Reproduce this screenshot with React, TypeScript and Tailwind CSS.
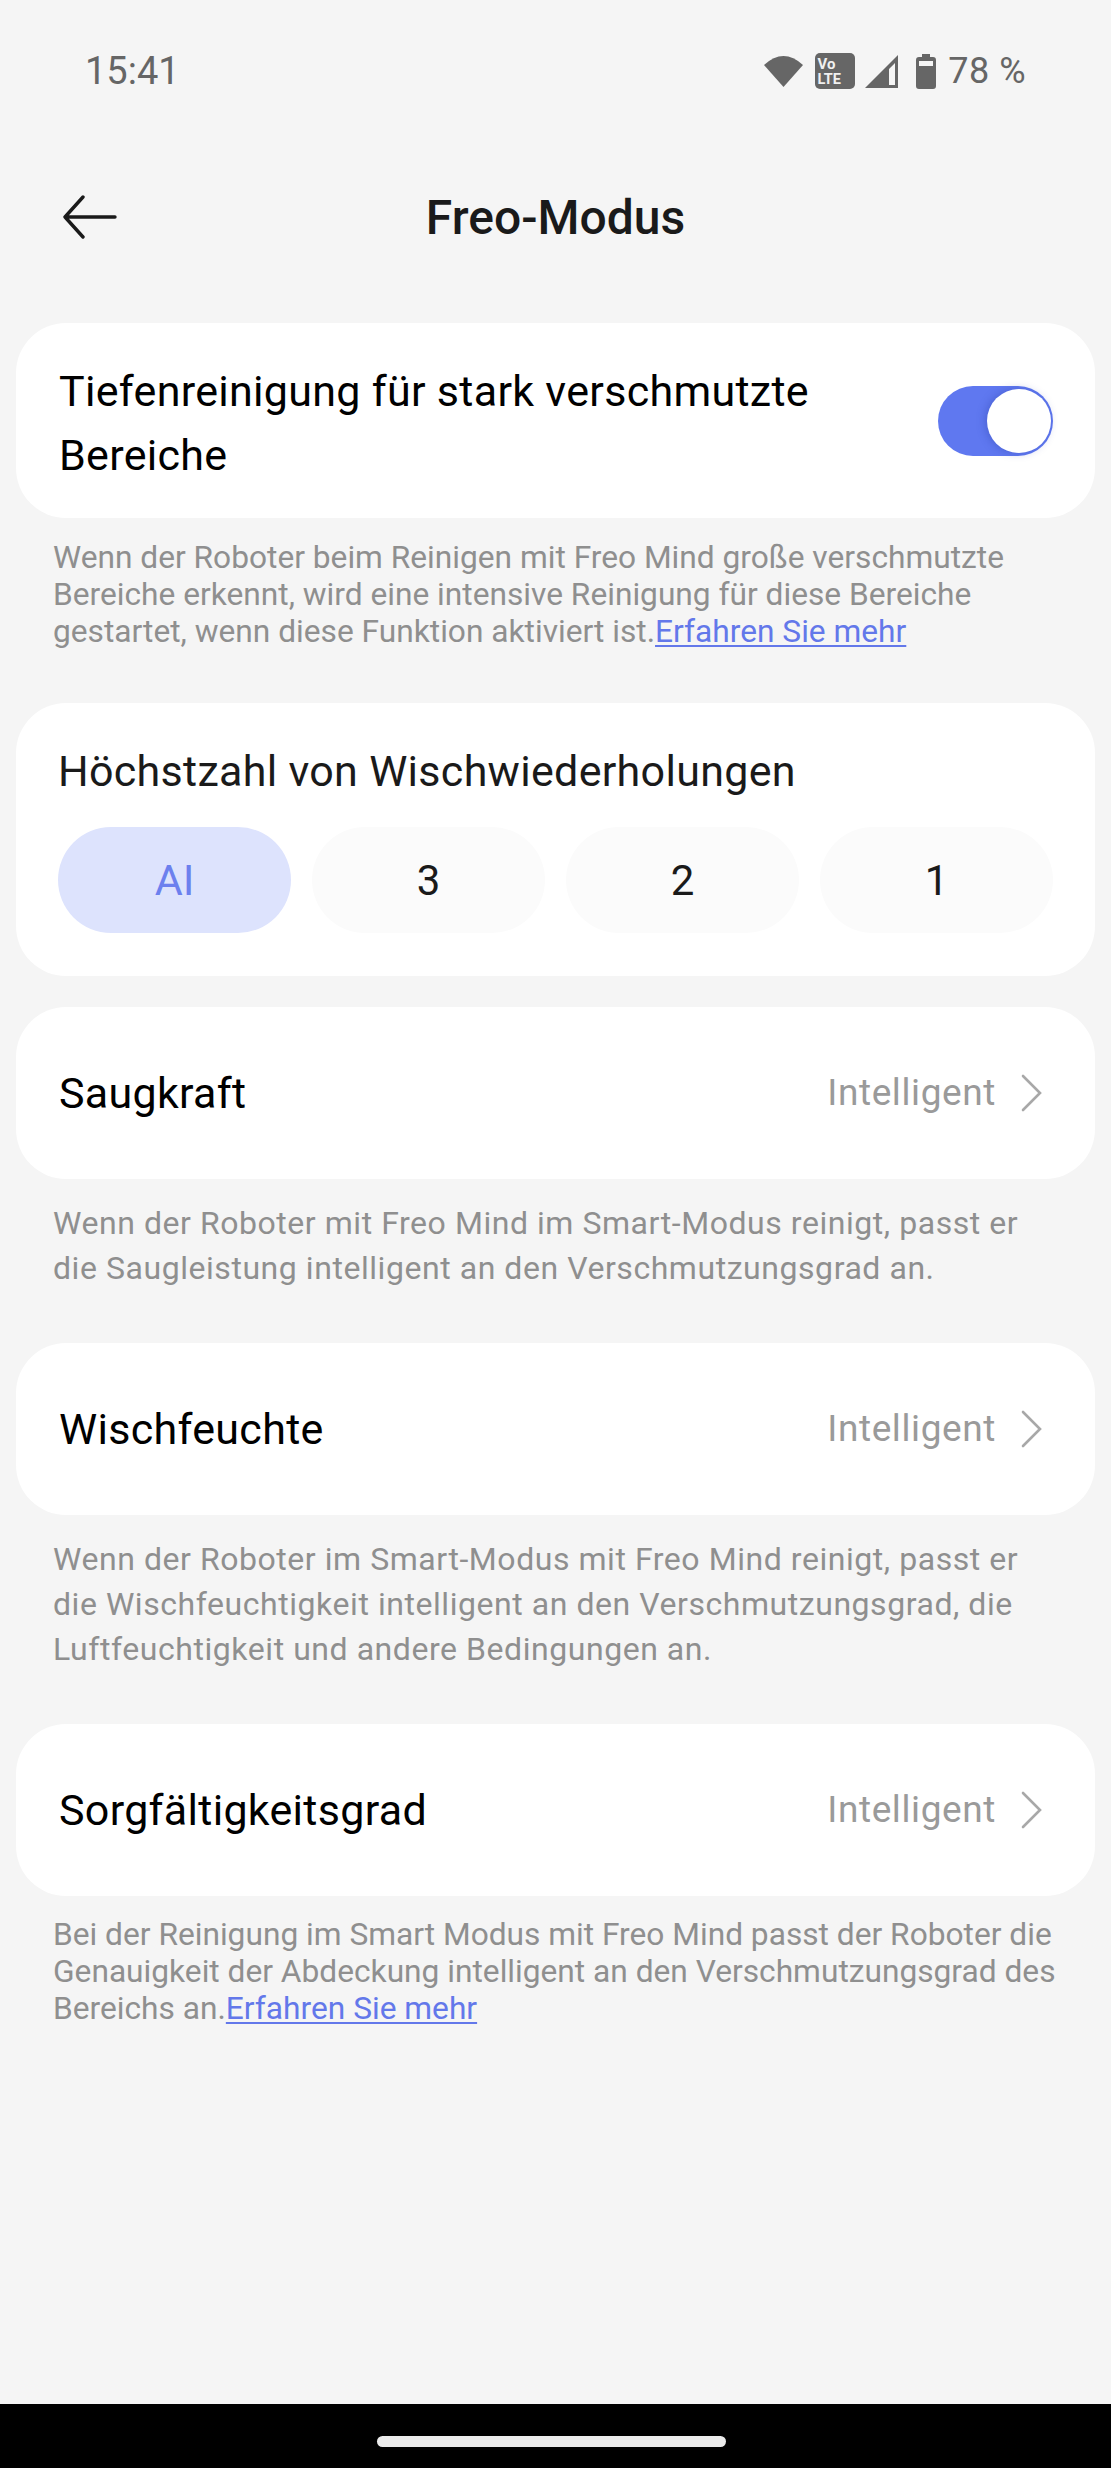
import React from "react";

function Chevron() {
  return (
    <svg width="24" height="38" viewBox="0 0 24 38" fill="none" className="ml-[24px]">
      <path d="M3 2 L20 19 L3 36" stroke="#a8a8a8" strokeWidth="2.6" strokeLinecap="round" />
    </svg>
  );
}

function Row({ label, top }: { label: string; top: string }) {
  return (
    <div className={`mx-4 h-[172px] rounded-[50px] bg-white flex items-center justify-between pl-[43px] pr-[51px] ${top}`}>
      <span className="text-[43px] leading-[60px] text-black tracking-[0.3px]">{label}</span>
      <span className="flex items-center">
        <span className="text-[37px] leading-[50px] text-[#9a9a9a] tracking-[0.6px]">Intelligent</span>
        <Chevron />
      </span>
    </div>
  );
}

function Link() {
  return <span className="text-[#6378ea] underline underline-offset-[3px] decoration-[2px]">Erfahren Sie mehr</span>;
}

export default function App() {
  return (
    <div className="relative w-[1111px] h-[2468px] bg-[#f5f5f5] overflow-hidden flex flex-col font-['Roboto',sans-serif]">
      {/* status bar */}
      <div className="h-[140px] flex items-center justify-between pl-[85px] pr-[85px] text-[#666666] shrink-0">
        <span className="text-[38px] leading-[40px] translate-y-[1px]">15:41</span>
        <div className="flex items-center translate-y-[1px] text-[36px]">
          <svg width="41" height="34" viewBox="0 0 41 34" className="mr-[11px]">
            <path d="M1 11 Q20.5 -7 40 11 L20.5 33 Z" fill="#666666" />
          </svg>
          <svg width="40" height="36" viewBox="0 0 40 36" className="mr-[10px]">
            <rect x="0" y="0" width="40" height="36" rx="5" fill="#666666" />
            <text x="2.5" y="16" fontSize="15" fontWeight="700" fill="#f0f0f0" fontFamily="Roboto">Vo</text>
            <text x="2.5" y="31" fontSize="14.5" fontWeight="700" fill="#f0f0f0" fontFamily="Roboto">LTE</text>
          </svg>
          <svg width="33" height="33" viewBox="0 0 33 33" className="mr-[18px]">
            <path fillRule="evenodd" d="M33 0 V33 H0 Z M30 8 L24 14 V30 H30 Z" fill="#666666" />
          </svg>
          <svg width="20" height="35" viewBox="0 0 20 35" className="mr-[12px]">
            <path fillRule="evenodd" d="M6 0 H14 V3 H17 Q20 3 20 6 V32 Q20 35 17 35 H3 Q0 35 0 32 V6 Q0 3 3 3 H6 Z M3 7 V12 H17 V7 Z" fill="#666666" />
          </svg>
          <span className="leading-[40px] tracking-[0.5px]">78 %</span>
        </div>
      </div>

      {/* header */}
      <div className="relative h-[156px] flex items-center justify-center shrink-0">
        <svg width="56" height="44" viewBox="0 0 56 44" fill="none" className="absolute left-[62px] top-[55px]">
          <path d="M21 2 L3 22 L21 42 M3 22 H53" stroke="#1a1a1a" strokeWidth="3.4" strokeLinecap="round" strokeLinejoin="round" />
        </svg>
        <span className="text-[48px] leading-[56px] font-medium text-[#1a1a1a]">Freo-Modus</span>
      </div>

      {/* card 1 */}
      <div className="mt-[27px] mx-4 h-[195px] rounded-[50px] bg-white flex items-center justify-between pl-[43px] pr-[42px] shrink-0">
        <p className="text-[43px] leading-[64px] text-black tracking-[0.3px] w-[800px] translate-y-[2px]">
          Tiefenreinigung für stark verschmutzte Bereiche
        </p>
        <div className="w-[115px] h-[70px] rounded-full bg-[#5f78f0] flex items-center justify-end pr-[2px]">
          <div className="w-[64px] h-[64px] rounded-full bg-white shadow-[-2px_0_8px_rgba(40,60,160,0.35)]" />
        </div>
      </div>
      <p className="mt-[21px] ml-[53px] mr-[45px] text-[31.7px] leading-[37px] text-[#8f8f8f]">
        Wenn der Roboter beim Reinigen mit Freo Mind große verschmutzte Bereiche erkennt, wird eine intensive Reinigung für diese Bereiche gestartet, wenn diese Funktion aktiviert ist.<Link />
      </p>

      {/* card 2 */}
      <div className="mt-[53px] mx-4 h-[273px] rounded-[50px] bg-white px-[42px] pt-[38px] shrink-0">
        <p className="text-[43px] leading-[60px] text-[#1a1a1a] tracking-[0.3px]">Höchstzahl von Wischwiederholungen</p>
        <div className="mt-[26px] grid grid-cols-4 gap-[21px]">
          <div className="h-[106px] rounded-[53px] bg-[#dde3fd] flex items-center justify-center text-[43px] text-[#6c80ee]">AI</div>
          <div className="h-[106px] rounded-[53px] bg-[#fbfbfb] flex items-center justify-center text-[42px] text-[#1a1a1a]">3</div>
          <div className="h-[106px] rounded-[53px] bg-[#fbfbfb] flex items-center justify-center text-[42px] text-[#1a1a1a]">2</div>
          <div className="h-[106px] rounded-[53px] bg-[#fbfbfb] flex items-center justify-center text-[42px] text-[#1a1a1a]">1</div>
        </div>
      </div>

      <Row label="Saugkraft" top="mt-[31px] shrink-0" />
      <p className="mt-[22px] mx-[53px] text-[32px] leading-[45px] text-[#8f8f8f] tracking-[0.55px]">
        Wenn der Roboter mit Freo Mind im Smart-Modus reinigt, passt er die Saugleistung intelligent an den Verschmutzungsgrad an.
      </p>

      <Row label="Wischfeuchte" top="mt-[52px] shrink-0" />
      <p className="mt-[22px] mx-[53px] text-[32px] leading-[45px] text-[#8f8f8f] tracking-[0.55px]">
        Wenn der Roboter im Smart-Modus mit Freo Mind reinigt, passt er die Wischfeuchtigkeit intelligent an den Verschmutzungsgrad, die Luftfeuchtigkeit und andere Bedingungen an.
      </p>

      <Row label="Sorgfältigkeitsgrad" top="mt-[52px] shrink-0" />
      <p className="mt-[20px] ml-[53px] mr-[45px] text-[31.7px] leading-[37px] text-[#8f8f8f]">
        Bei der Reinigung im Smart Modus mit Freo Mind passt der Roboter die Genauigkeit der Abdeckung intelligent an den Verschmutzungsgrad des Bereichs an.<Link />
      </p>

      {/* nav bar */}
      <div className="mt-auto h-[64px] bg-black flex justify-center pt-[32px] shrink-0">
        <div className="w-[349px] h-[11px] rounded-full bg-[#ebebeb] mr-[8px]" />
      </div>
    </div>
  );
}
